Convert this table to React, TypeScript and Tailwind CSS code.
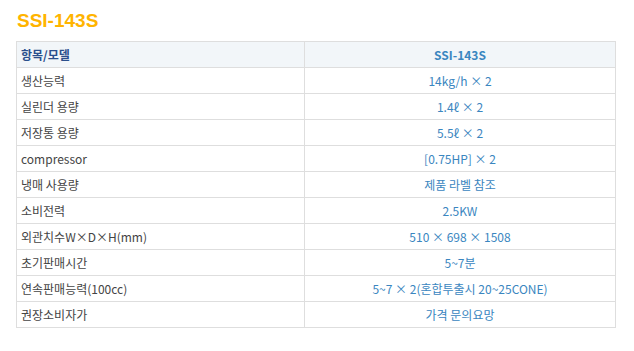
const rows: [string, string][] = [
  ["생산능력", "14kg/h × 2"],
  ["실린더 용량", "1.4ℓ × 2"],
  ["저장통 용량", "5.5ℓ × 2"],
  ["compressor", "[0.75HP] × 2"],
  ["냉매 사용량", "제품 라벨 참조"],
  ["소비전력", "2.5KW"],
  ["외관치수W×D×H(mm)", "510 × 698 × 1508"],
  ["초기판매시간", "5~7분"],
  ["연속판매능력(100cc)", "5~7 × 2(혼합투출시 20~25CONE)"],
  ["권장소비자가", "가격 문의요망"],
];

export default function App() {
  return (
    <div className="h-[351px] w-[634px] bg-white pl-4 pt-[11px] font-['Noto_Sans_CJK_KR','Liberation_Sans',sans-serif]">
      <h1 className="pl-[1px] font-['Liberation_Sans',sans-serif] text-[19px] font-bold leading-[20px] text-[#ffb400]">
        SSI-143S
      </h1>

      <table className="mt-[10px] w-[600px] border-collapse border border-[#dedede] text-[12px]">
        <thead>
          <tr className="h-[26px] bg-[#f2f6f9]">
            <th className="w-[288px] border border-[#dedede] pl-1 text-left font-bold text-[#2b4f8c]">
              항목/모델
            </th>
            <th className="border border-[#dedede] text-center font-bold text-[#3a86c0]">
              SSI-143S
            </th>
          </tr>
        </thead>
        <tbody>
          {rows.map(([label, value]) => (
            <tr key={label} className="h-[26px]">
              <td className="border border-[#dedede] pl-1 text-[#444]">{label}</td>
              <td className="border border-[#dedede] text-center text-[#3a86c0]">{value}</td>
            </tr>
          ))}
        </tbody>
      </table>
    </div>
  );
}
